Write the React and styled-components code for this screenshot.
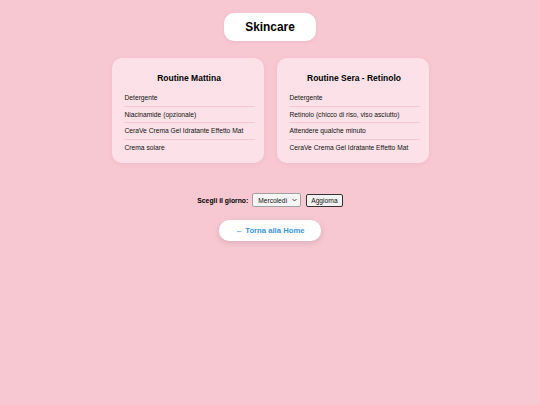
import React from "react";
import styled, { createGlobalStyle } from "styled-components";

const Global = createGlobalStyle`
  html, body { margin: 0; padding: 0; }
  body {
    background: #f7c7d2;
    font-family: "Liberation Sans", Arial, sans-serif;
    width: 540px;
    height: 405px;
  }
`;

const Page = styled.div`
  display: flex;
  flex-direction: column;
  align-items: center;
  padding-top: 13px;
`;

const TitleBox = styled.div`
  width: 92px;
  height: 28px;
  background: #fff;
  border-radius: 10px;
  display: flex;
  align-items: center;
  justify-content: center;
  box-shadow: 0 1px 4px rgba(0, 0, 0, 0.06);
`;

const Title = styled.h1`
  margin: 0;
  font-size: 11.9px;
  font-weight: 700;
  color: #000;
`;

const Cards = styled.div`
  display: flex;
  gap: 13px;
  margin-top: 17px;
`;

const Card = styled.div`
  width: 152px;
  height: 105px;
  box-sizing: border-box;
  background: #fce2e8;
  border-radius: 10px;
  padding: 14px 9px 0 12px;
  box-shadow: 0 1px 4px rgba(200, 120, 140, 0.12);
`;

const CardTitle = styled.h2`
  margin: 0 0 6px;
  text-align: center;
  font-size: 8.5px;
  font-weight: 700;
  color: #000;
  line-height: 12px;
`;

const List = styled.ul`
  list-style: none;
  margin: 0;
  padding: 0;
`;

const Item = styled.li`
  font-size: 6.7px;
  color: #111;
  line-height: 15.5px;
  padding-left: 1px;
  border-bottom: ${(p) => (p.$last ? "none" : "1px solid #f5c5d0")};
`;

const Controls = styled.div`
  display: flex;
  align-items: center;
  margin-top: 30px;
  gap: 3px;
`;

const Label = styled.label`
  font-size: 6.8px;
  font-weight: 700;
  color: #000;
  margin-right: 1px;
`;

const SelectWrap = styled.div`
  position: relative;
  width: 49px;
  height: 14px;
`;

const Select = styled.select`
  display: block;
  appearance: none;
  -webkit-appearance: none;
  width: 100%;
  height: 100%;
  box-sizing: border-box;
  margin: 0;
  font-family: "Liberation Sans", Arial, sans-serif;
  font-size: 6.6px;
  padding: 0 0 0 5px;
  border: 1px solid #a0a0a0;
  border-radius: 2px;
  background: #f5f5f5;
  color: #111;
  outline: none;
`;

const Chevron = styled.svg`
  position: absolute;
  right: 4px;
  top: 5px;
  width: 5px;
  height: 4px;
  pointer-events: none;
`;

const SmallButton = styled.button`
  height: 13px;
  margin: 0 0 0 2px;
  font-family: "Liberation Sans", Arial, sans-serif;
  font-size: 6.6px;
  padding: 0 4px;
  border: 1px solid #333;
  border-radius: 2px;
  background: #f2f2f2;
  color: #111;
`;

const HomeButton = styled.a`
  margin-top: 13px;
  width: 102px;
  height: 21px;
  background: #fff;
  border-radius: 10px;
  display: flex;
  align-items: center;
  justify-content: center;
  font-size: 7.7px;
  font-weight: 700;
  color: #3a95d6;
  text-decoration: none;
  box-shadow: 0 2px 6px rgba(0, 0, 0, 0.12);
`;

const morning = [
  "Detergente",
  "Niacinamide (opzionale)",
  "CeraVe Crema Gel Idratante Effetto Mat",
  "Crema solare",
];
const evening = [
  "Detergente",
  "Retinolo (chicco di riso, viso asciutto)",
  "Attendere qualche minuto",
  "CeraVe Crema Gel Idratante Effetto Mat",
];

function RoutineCard({ title, items }) {
  return (
    <Card>
      <CardTitle>{title}</CardTitle>
      <List>
        {items.map((it, i) => (
          <Item key={i} $last={i === items.length - 1}>
            {it}
          </Item>
        ))}
      </List>
    </Card>
  );
}

export default function App() {
  return (
    <>
      <Global />
      <Page>
        <TitleBox>
          <Title>Skincare</Title>
        </TitleBox>
        <Cards>
          <RoutineCard title="Routine Mattina" items={morning} />
          <RoutineCard title="Routine Sera - Retinolo" items={evening} />
        </Cards>
        <Controls>
          <Label>Scegli il giorno:</Label>
          <SelectWrap>
            <Select defaultValue="Mercoledì">
              <option>Lunedì</option>
              <option>Martedì</option>
              <option>Mercoledì</option>
              <option>Giovedì</option>
              <option>Venerdì</option>
              <option>Sabato</option>
              <option>Domenica</option>
            </Select>
            <Chevron viewBox="0 0 10 7">
              <path d="M1 1.5 L5 5.5 L9 1.5" fill="none" stroke="#333" strokeWidth="1.8" />
            </Chevron>
          </SelectWrap>
          <SmallButton>Aggiorna</SmallButton>
        </Controls>
        <HomeButton href="#">← Torna alla Home</HomeButton>
      </Page>
    </>
  );
}
